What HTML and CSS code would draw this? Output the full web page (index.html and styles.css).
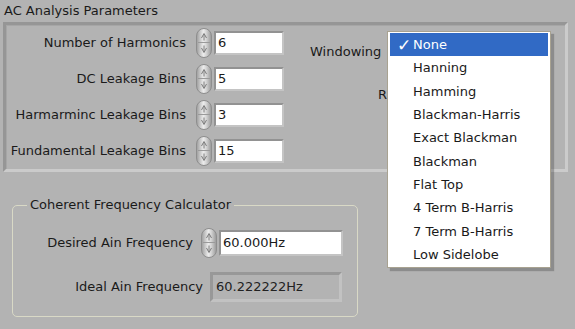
FILE: index.html
```html
<!DOCTYPE html>
<html lang="en">
<head>
    <meta charset="UTF-8">
    <title>AC Analysis Parameters</title>
    <link rel="stylesheet" href="styles.css">
</head>
<body>
    <div class="title">AC Analysis Parameters</div>

    <div class="panel">
        <div class="fields">
            <div class="row">
                <label>Number of Harmonics</label>
                <span class="spin"><svg viewBox="0 0 16 30"><path d="M8 5.5L5.5 10M8 5.5L10.5 10M8 6V12.5M8 24.5L5.5 20M8 24.5L10.5 20M8 24V17.5"/></svg></span>
                <span class="num">6</span>
            </div>
            <div class="row">
                <label>DC Leakage Bins</label>
                <span class="spin"><svg viewBox="0 0 16 30"><path d="M8 5.5L5.5 10M8 5.5L10.5 10M8 6V12.5M8 24.5L5.5 20M8 24.5L10.5 20M8 24V17.5"/></svg></span>
                <span class="num">5</span>
            </div>
            <div class="row">
                <label>Harmarminc Leakage Bins</label>
                <span class="spin"><svg viewBox="0 0 16 30"><path d="M8 5.5L5.5 10M8 5.5L10.5 10M8 6V12.5M8 24.5L5.5 20M8 24.5L10.5 20M8 24V17.5"/></svg></span>
                <span class="num">3</span>
            </div>
            <div class="row">
                <label>Fundamental Leakage Bins</label>
                <span class="spin"><svg viewBox="0 0 16 30"><path d="M8 5.5L5.5 10M8 5.5L10.5 10M8 6V12.5M8 24.5L5.5 20M8 24.5L10.5 20M8 24V17.5"/></svg></span>
                <span class="num">15</span>
            </div>
        </div>
        <div class="side">
            <div class="side-label">Windowing</div>
            <div class="side-label second">R</div>
        </div>
    </div>

    <fieldset class="group">
        <legend>Coherent Frequency Calculator</legend>
        <div class="row freq">
            <label>Desired Ain Frequency</label>
            <span class="spin"><svg viewBox="0 0 16 30"><path d="M8 5.5L5.5 10M8 5.5L10.5 10M8 6V12.5M8 24.5L5.5 20M8 24.5L10.5 20M8 24V17.5"/></svg></span>
            <span class="num wide">60.000Hz</span>
        </div>
        <div class="row ideal">
            <label>Ideal Ain Frequency</label>
            <span class="indicator">60.222222Hz</span>
        </div>
    </fieldset>

    <ul class="menu">
        <li class="selected"><span class="check">✓</span>None</li>
        <li>Hanning</li>
        <li>Hamming</li>
        <li>Blackman-Harris</li>
        <li>Exact Blackman</li>
        <li>Blackman</li>
        <li>Flat Top</li>
        <li>4 Term B-Harris</li>
        <li>7 Term B-Harris</li>
        <li>Low Sidelobe</li>
    </ul>
</body>
</html>
```

FILE: styles.css
```css
body {
    margin: 0;
    background: #b3b3b3;
    font-family: 'DejaVu Sans', 'Liberation Sans', sans-serif;
    font-size: 13px;
    line-height: 16px;
    color: #1a1a1a;
    width: 575px;
    height: 329px;
    overflow: hidden;
    position: relative;
}
.title {
    padding: 3px 0 0 4px;
    height: 19px;
}
.panel {
    display: flex;
    margin: 0 7px 0 3px;
    height: 150px;
    box-sizing: border-box;
    border: 3px solid;
    border-color: #969696 #cbcbcb #cbcbcb #969696;
    box-shadow: inset 1px 1px 0 #a6a6a6;
}
.row {
    display: flex;
    align-items: center;
    height: 36px;
}
.row label {
    width: 180px;
    text-align: right;
    flex: none;
}
.spin {
    flex: none;
    width: 16px;
    height: 30px;
    box-sizing: border-box;
    margin-left: 10px;
    border: 1px solid #8e8e8e;
    border-radius: 8px;
    background: linear-gradient(90deg, #a2a2a2, #ececec 45%, #d6d6d6 65%, #9c9c9c);
    position: relative;
}
.spin::after {
    content: '';
    position: absolute;
    left: 1px;
    right: 1px;
    top: 13px;
    border-top: 1px solid #9a9a9a;
}
.spin svg {
    position: absolute;
    left: -1px;
    top: -1px;
    width: 16px;
    height: 30px;
    fill: none;
    stroke: #7c7c7c;
    stroke-width: 1;
}
.num {
    flex: none;
    width: 70px;
    height: 24px;
    box-sizing: border-box;
    margin-left: 2px;
    border: 2px solid;
    border-color: #929292 #c4c4c4 #c4c4c4 #929292;
    background: #fff;
    padding: 2px 0 0 2px;
}
.side {
    margin-left: 26px;
    padding-top: 19px;
}
.side-label.second {
    margin: 27px 0 0 68px;
}
.group {
    margin: 25px 0 0 12px;
    width: 346px;
    height: 120px;
    box-sizing: border-box;
    padding: 0;
    border: 1px solid #d9d9c6;
    border-radius: 5px;
}
.group legend {
    margin-left: 14px;
    padding: 0 3px;
}
.group .row {
    height: 30px;
}
.group .freq {
    margin-top: 15px;
}
.group .freq .spin {
    margin-left: 8px;
}
.num.wide {
    width: 124px;
    height: 26px;
    padding-top: 3px;
}
.group .ideal {
    margin-top: 14px;
}
.group .ideal label {
    width: 190px;
}
.indicator {
    margin-left: 7px;
    width: 132px;
    height: 30px;
    box-sizing: border-box;
    border: 3px solid;
    border-color: #989898 #c2c2c2 #c2c2c2 #989898;
    padding: 4px 0 0 3px;
    color: #222;
}
.menu {
    position: absolute;
    left: 387px;
    top: 31px;
    width: 164px;
    height: 237px;
    box-sizing: border-box;
    margin: 0;
    padding: 1px;
    list-style: none;
    background: #fff;
    border: 1px solid #a8a291;
    box-shadow: 3px 3px 1px rgba(70, 70, 70, 0.35);
}
.menu li {
    height: 23.33px;
    line-height: 23px;
    padding-left: 24px;
    position: relative;
}
.menu .selected {
    background: #316ac5;
    color: #fff;
    margin: 0 1px;
    padding-left: 23px;
}
.check {
    position: absolute;
    left: 7px;
    top: 1px;
    font-size: 17px;
}
```
